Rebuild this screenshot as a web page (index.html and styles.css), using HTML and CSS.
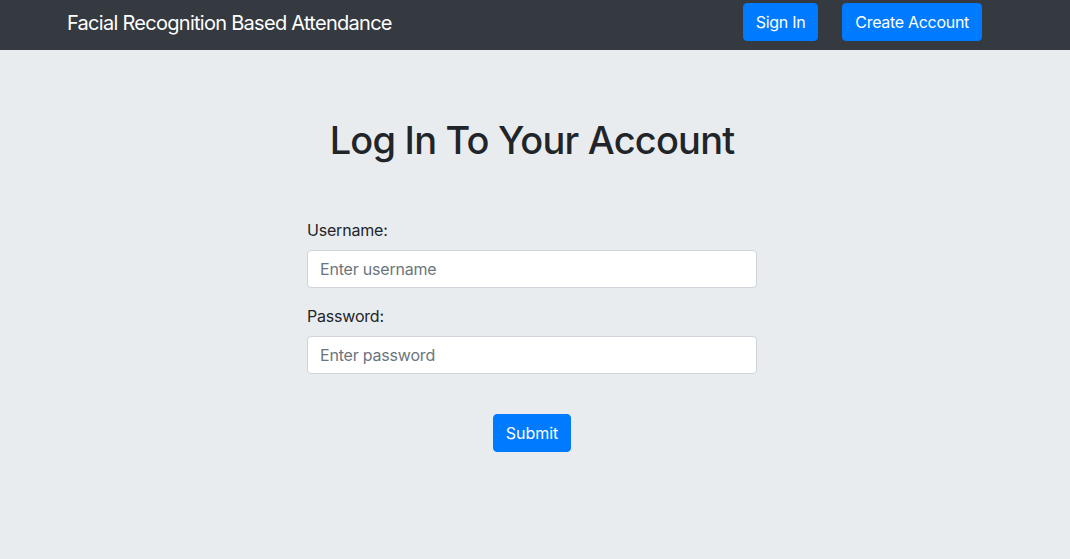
FILE: index.html
```html
<!DOCTYPE html>
<html lang="en">
<head>
<meta charset="utf-8">
<title>Log In</title>
<link rel="stylesheet" href="styles.css">
</head>
<body>
<nav class="navbar">
  <a class="brand" href="#">Facial Recognition Based Attendance</a>
  <div class="nav-actions">
    <a class="btn" href="#">Sign In</a>
    <a class="btn" href="#">Create Account</a>
  </div>
</nav>
<main class="jumbo">
  <div class="panel">
    <h1 class="title">Log In To Your Account</h1>
    <form class="form">
      <div class="group">
        <label class="label" for="u">Username:</label>
        <input class="input" id="u" type="text" placeholder="Enter username">
      </div>
      <div class="group">
        <label class="label" for="p">Password:</label>
        <input class="input" id="p" type="password" placeholder="Enter password">
      </div>
      <div class="actions">
        <button class="btn btn-submit" type="submit">Submit</button>
      </div>
    </form>
  </div>
</main>
</body>
</html>
```
FILE: styles.css
```css
* { box-sizing: border-box; }
html, body { margin: 0; height: 100%; }
body {
  font-family: Inter, "Noto Sans", "Liberation Sans", sans-serif;
  font-size: 16px;
  line-height: 1.5;
  color: #212529;
  background: #e9ecef;
}
.navbar {
  height: 50px;
  background: #343a40;
  display: flex;
  align-items: flex-start;
  justify-content: space-between;
  padding: 0 88px 0 67px;
}
.brand {
  color: #fff;
  text-decoration: none;
  font-size: 20px;
  letter-spacing: -0.72px;
  line-height: 46px;
}
.nav-actions {
  display: flex;
  gap: 24px;
  padding-top: 3px;
}
.btn {
  display: inline-block;
  background: #007bff;
  color: #fff;
  border: 1px solid #007bff;
  border-radius: 4px;
  padding: 6px 12px;
  font: inherit;
  font-size: 16px;
  line-height: 24px;
  letter-spacing: -0.3px;
  text-decoration: none;
  cursor: pointer;
}
.btn-submit { letter-spacing: 0; }
.jumbo {
  display: flex;
  justify-content: center;
  padding: 0 6px 0 0;
}
.panel {
  width: 450px;
  padding-top: 66px;
}
.title {
  margin: 0 0 54px;
  font-size: 38px;
  font-weight: 500;
  letter-spacing: -0.8px;
  line-height: 48px;
  text-align: center;
  white-space: nowrap;
}
.group { margin-bottom: 16px; }
.label {
  display: block;
  margin-bottom: 8px;
  letter-spacing: -0.2px;
}
.input {
  display: block;
  width: 100%;
  height: 38px;
  padding: 6px 12px;
  font: inherit;
  letter-spacing: -0.2px;
  color: #495057;
  background: #fff;
  border: 1px solid #ced4da;
  border-radius: 4px;
}
.input::placeholder { color: #6c757d; }
.actions {
  display: flex;
  justify-content: center;
  padding-top: 24px;
}
```
